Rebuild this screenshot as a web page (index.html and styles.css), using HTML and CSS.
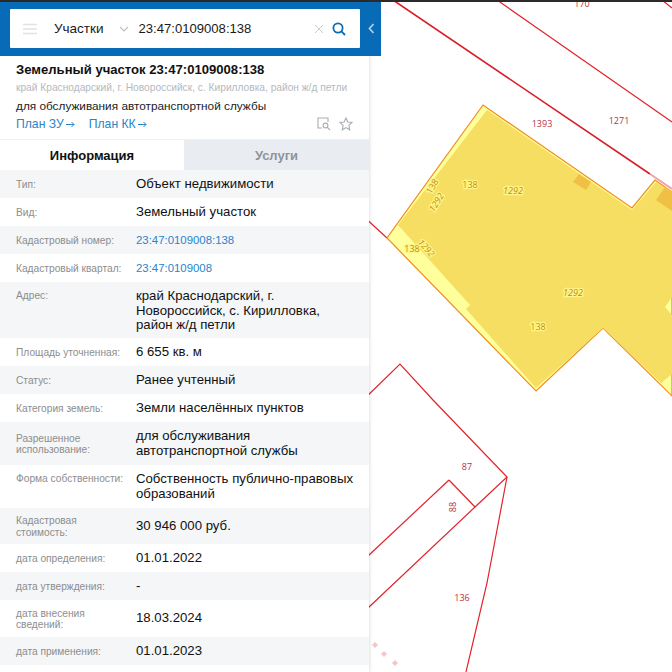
FILE: index.html
```html
<!DOCTYPE html>
<html lang="ru">
<head>
<meta charset="utf-8">
<title>Земельный участок 23:47:0109008:138</title>
<link rel="stylesheet" href="styles.css">
</head>
<body>
<div class="page">
  <svg class="map" width="672" height="672" viewBox="0 0 672 672">
    <!-- neighbouring parcels -->
    <g class="parcel">
      <path class="thick" d="M393 0L650 174"/>
      <path d="M497 0L672 122"/>
      <path d="M662 0L672 8"/>
      <path d="M362 215L387 238"/>
      <path d="M360 403L400 364L433 400L507 477L475 507L368 608"/>
      <path d="M449 480L475 507"/>
      <path d="M449 480L368 556"/>
      <path d="M507 477L487 583L466 672"/>
    </g>
    <path class="fade" d="M650 174L672 189"/>
    <!-- selected parcel -->
    <path class="plot-edge" d="M483 105L387 238L536 391L603 328L672 396V192L655 180L632 208Z"/>
    <path class="plot-fill" d="M487 110L632 210L656 182L672 193V297L665 307L672 315V374L661 383L603 328L536 388L466 309L470 305L398 225Z"/>
    <path class="plot-dark" d="M579 174L591 182L586 190L573 182Z"/>
    <path class="plot-dark" d="M665 187L672 191V211L656 200Z"/>
    <g class="red-label">
      <text x="582" y="7">170</text>
      <text x="542" y="127">1393</text>
      <text x="619" y="124">1271</text>
      <text x="467" y="470">87</text>
      <text x="462" y="601">136</text>
      <text transform="translate(456 507) rotate(-90)">88</text>
    </g>
    <g class="plot-label">
      <text x="470" y="188">138</text>
      <text x="412" y="252">138</text>
      <text x="538" y="330">138</text>
      <text transform="translate(435 188) rotate(-58)">138</text>
    </g>
    <g class="plot-label italic">
      <text x="513" y="194">1292</text>
      <text x="573" y="296">1292</text>
      <text transform="translate(439 204) rotate(-58)">1292</text>
      <text transform="translate(424 250) rotate(48)">1292</text>
    </g>
    <g class="dots">
      <path d="M375 642l3 3-3 3-3-3z"/>
      <path d="M384 651l3 3-3 3-3-3z"/>
      <path d="M395 660l3 3-3 3-3-3z"/>
    </g>
  </svg>

  <div class="topline"></div>

  <aside class="panel">
    <header class="bar">
      <div class="search">
        <svg class="burger" width="14" height="12" viewBox="0 0 14 12"><path d="M0 1.5H14M0 6H14M0 10.5H14"/></svg>
        <span class="kind">Участки</span>
        <svg class="caret" width="10" height="6" viewBox="0 0 10 6"><path d="M1 1L5 5L9 1"/></svg>
        <span class="query">23:47:0109008:138</span>
        <svg class="clear" width="10" height="10" viewBox="0 0 10 10"><path d="M1 1L9 9M9 1L1 9"/></svg>
        <svg class="find" width="14" height="14" viewBox="0 0 14 14"><circle cx="6" cy="6" r="4.6"/><path d="M9.4 9.4L13 13"/></svg>
      </div>
      <svg class="toggle" width="7" height="11" viewBox="0 0 7 11"><path d="M5.5 1L1.5 5.5L5.5 10"/></svg>
    </header>

    <section class="summary">
      <h1 class="title">Земельный участок 23:47:0109008:138</h1>
      <p class="address">край Краснодарский, г. Новороссийск, с. Кирилловка, район ж/д петли</p>
      <p class="purpose">для обслуживания автотранспортной службы</p>
      <div class="actions">
        <a class="plan">План ЗУ<svg class="arrow" width="9" height="7" viewBox="0 0 9 7"><path d="M0 3.5H8M5.5 1L8 3.5L5.5 6"/></svg></a>
        <a class="plan">План КК<svg class="arrow" width="9" height="7" viewBox="0 0 9 7"><path d="M0 3.5H8M5.5 1L8 3.5L5.5 6"/></svg></a>
        <svg class="tool first" width="14" height="14" viewBox="0 0 14 14"><path d="M5 11H1V1H11V5"/><circle cx="8.5" cy="8.5" r="2.4"/><path d="M10.3 10.3L13 13"/></svg>
        <svg class="tool" width="14" height="14" viewBox="0 0 14 14"><path d="M7 1L8.8 5L13 5.5L9.9 8.4L10.7 12.8L7 10.6L3.3 12.8L4.1 8.4L1 5.5L5.2 5Z"/></svg>
      </div>
    </section>

    <nav class="tabs">
      <div class="tab active">Информация</div>
      <div class="tab">Услуги</div>
    </nav>

    <dl class="info">
      <div class="row h28"><dt>Тип:</dt><dd>Объект недвижимости</dd></div>
      <div class="row h28"><dt>Вид:</dt><dd>Земельный участок</dd></div>
      <div class="row h28"><dt>Кадастровый номер:</dt><dd class="link">23:47:0109008:138</dd></div>
      <div class="row h28"><dt>Кадастровый квартал:</dt><dd class="link">23:47:0109008</dd></div>
      <div class="row tall"><dt>Адрес:</dt><dd>край Краснодарский, г. Новороссийск, с. Кирилловка, район ж/д петли</dd></div>
      <div class="row h28"><dt>Площадь уточненная:</dt><dd>6 655 кв. м</dd></div>
      <div class="row h28"><dt>Статус:</dt><dd>Ранее учтенный</dd></div>
      <div class="row h28"><dt>Категория земель:</dt><dd>Земли населённых пунктов</dd></div>
      <div class="row h43"><dt>Разрешенное использование:</dt><dd>для обслуживания автотранспортной службы</dd></div>
      <div class="row h43 top"><dt>Форма собственности:</dt><dd>Собственность публично-правовых образований</dd></div>
      <div class="row h36"><dt>Кадастровая стоимость:</dt><dd>30 946 000 руб.</dd></div>
      <div class="row h28"><dt>дата определения:</dt><dd>01.01.2022</dd></div>
      <div class="row h28"><dt>дата утверждения:</dt><dd>-</dd></div>
      <div class="row h37"><dt>дата внесения сведений:</dt><dd>18.03.2024</dd></div>
      <div class="row h28"><dt>дата применения:</dt><dd>01.01.2023</dd></div>
    </dl>
  </aside>
</div>
</body>
</html>
```

FILE: styles.css
```css
* { box-sizing: border-box; }

html, body { margin: 0; padding: 0; background: #fff; }

.page {
  position: relative;
  width: 672px;
  height: 672px;
  overflow: hidden;
  font-family: "Liberation Sans", Arial, sans-serif;
  color: #111;
}

.topline {
  position: relative;
  height: 2px;
  background: #2b2b2b;
}

/* Map layer */
.map { position: absolute; left: 0; top: 0; }
.parcel path { fill: none; stroke: #e2232b; stroke-width: 1.2; }
.parcel .thick { stroke-width: 1.6; stroke: #d81e28; }
.fade { fill: none; stroke: #eea3ab; stroke-width: 2; }
.plot-edge { fill: #ffff9c; stroke: #f08c1e; stroke-width: 1.2; stroke-linejoin: miter; }
.plot-fill { fill: #f6de62; }
.plot-dark { fill: #efc043; }
.map text { font-family: "Open Sans", "Liberation Sans", sans-serif; font-size: 9px; text-anchor: middle; }
.red-label text { fill: #b8333f; }
.plot-label text {
  fill: #c58f00;
  stroke: #fff58c;
  stroke-width: 2.5px;
  paint-order: stroke;
}
.plot-label.italic text { font-style: italic; }
.dots path { fill: #f6c6c6; }

/* Side panel */
.panel {
  position: absolute;
  left: 0;
  top: 2px;
  width: 369px;
  height: 670px;
  background: #fff;
  box-shadow: 1px 0 3px rgba(0, 0, 0, .12);
}

.bar {
  display: flex;
  align-items: center;
  width: 381px;
  height: 54px;
  padding: 0 0 1px 10px;
  background: #076bb7;
}

.search {
  display: flex;
  align-items: center;
  width: 350px;
  height: 39px;
  padding: 0 14px 0 13px;
  background: #fff;
  border-radius: 1px;
}

.burger { stroke: #dfe2e5; stroke-width: 1.4; fill: none; }
.kind { margin-left: 17px; font-size: 13.5px; color: #1a1a1a; }
.caret { margin-left: 15px; fill: none; stroke: #b9bfc5; stroke-width: 1.1; }
.query { margin-left: 10px; font-size: 13.1px; color: #1a1a1a; }
.clear { margin-left: auto; fill: none; stroke: #c8ccd0; stroke-width: 1; }
.find { margin-left: 8px; fill: none; stroke: #0a6db8; stroke-width: 1.8; }
.toggle { margin-left: 8px; fill: none; stroke: #a8cdea; stroke-width: 1.8; }

.summary { padding: 5px 0 0 16px; height: 83px; }
.title { margin: 0; font-size: 13.1px; line-height: 17px; font-weight: 700; color: #111; }
.address { margin: 3px 0 0; font-size: 10.2px; line-height: 13px; color: #b4b9be; white-space: nowrap; }
.purpose { margin: 5px 0 0; font-size: 11.8px; line-height: 14px; color: #222; }

.actions { display: flex; align-items: center; margin-top: 3px; padding-right: 16px; }
.plan { display: flex; align-items: center; gap: 2px; margin-right: 14px; font-size: 12.2px; line-height: 16px; color: #2a84c9; }
.arrow { fill: none; stroke: #2a84c9; stroke-width: 1; }
.tool { fill: none; stroke: #a9aeb3; stroke-width: 1.1; margin-left: 8px; }
.tool.first { margin-left: auto; }

.tabs { display: flex; height: 31px; border-top: 1px solid #eef0f2; }
.tab {
  flex: 1;
  display: flex;
  align-items: center;
  justify-content: center;
  font-size: 13px;
  font-weight: 700;
  background: #e9edf1;
  color: #8e949a;
}
.tab.active { flex: 0 0 184px; background: #fff; color: #111; }

.info { margin: 0; }
.row { display: flex; align-items: center; padding-left: 16px; }
.row:nth-child(odd) { background: #f4f6f8; }
.row.h28 { height: 28px; }
.row.h43 { height: 43px; }
.row.h36 { height: 36px; }
.row.h37 { height: 37px; }
.row.tall { height: 56px; align-items: flex-start; padding-top: 7px; }
.row.top { align-items: flex-start; padding-top: 7px; }
.row dt {
  flex: 0 0 120px;
  padding: 1px 11px 0 0;
  font-size: 10.2px;
  line-height: 11.5px;
  color: #8d8d8d;
}
.row dd {
  margin: 0;
  flex: 1;
  padding-right: 11px;
  font-size: 13.2px;
  line-height: 14.5px;
  color: #111;
}
.row dd.link { font-size: 11.4px; color: #2a84c9; }
```
